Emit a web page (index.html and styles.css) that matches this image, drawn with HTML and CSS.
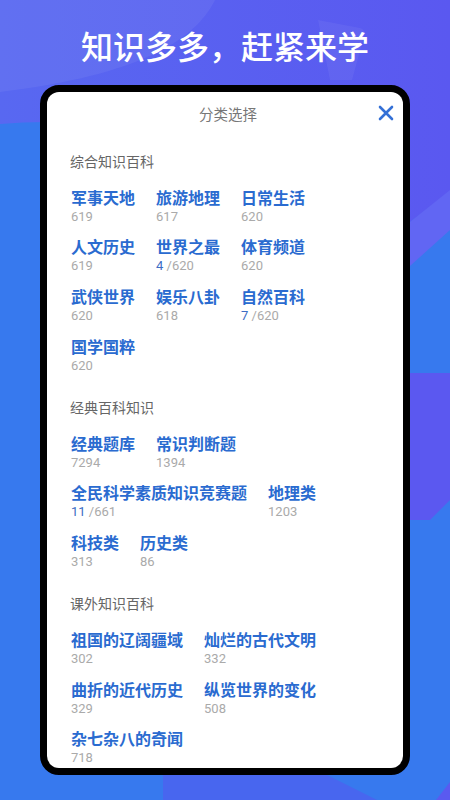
FILE: index.html
```html
<!DOCTYPE html>
<html lang="zh">
<head>
<meta charset="utf-8">
<title>分类选择</title>
<link rel="stylesheet" href="styles.css">
</head>
<body>
<svg class="bg" viewBox="0 0 450 800" width="450" height="800" aria-hidden="true">
  <defs>
    <linearGradient id="topg" x1="0" y1="0" x2="1" y2="0">
      <stop offset="0" stop-color="#5868f1"/>
      <stop offset="1" stop-color="#5a58f0"/>
    </linearGradient>
  </defs>
  <rect x="0" y="0" width="450" height="800" fill="#3779ee"/>
  <path d="M0 0 H450 V192 L410 222 C300 170 150 110 0 124 Z" fill="url(#topg)"/>
  <path d="M0 0 H215 C195 40 140 75 0 92 Z" fill="#ffffff" opacity="0.06"/>
  <path d="M410 222 L450 190 L450 230 L410 266 Z" fill="#6166f3"/>
  <path d="M318 20 L360 28 Q366 30 364 36 L352 80 L330 80 Z" fill="#ffffff" opacity="0.05"/>
  <path d="M395 373 H450 V500 L430 520 H395 Z" fill="#5b58f0"/>
  <path d="M163 775 H327 L377 800 H163 Z" fill="#4866ef"/>
  <path d="M436 800 L450 782 V800 Z" fill="#5a5af0"/>
</svg>
<main class="page">
  <h1 class="slogan">知识多多，赶紧来学</h1>
  <section class="phone">
    <div class="screen">
      <header class="bar">
        <span class="bar-side"></span>
        <span class="bar-title">分类选择</span>
        <span class="bar-side bar-right">
          <svg class="close" viewBox="0 0 16 16" width="16" height="16">
            <path d="M2 2 L14 14 M14 2 L2 14" stroke="#3470d6" stroke-width="2.6" stroke-linecap="round" fill="none"/>
          </svg>
        </span>
      </header>

      <div class="group">
        <h2 class="group-title">综合知识百科</h2>
        <div class="items">
          <div class="item"><div class="name">军事天地</div><div class="count">619</div></div>
          <div class="item"><div class="name">旅游地理</div><div class="count">617</div></div>
          <div class="item"><div class="name">日常生活</div><div class="count">620</div></div>
          <div class="item"><div class="name">人文历史</div><div class="count">619</div></div>
          <div class="item"><div class="name">世界之最</div><div class="count"><span class="done">4</span> /620</div></div>
          <div class="item"><div class="name">体育频道</div><div class="count">620</div></div>
          <div class="item"><div class="name">武侠世界</div><div class="count">620</div></div>
          <div class="item"><div class="name">娱乐八卦</div><div class="count">618</div></div>
          <div class="item"><div class="name">自然百科</div><div class="count"><span class="done">7</span> /620</div></div>
          <div class="item"><div class="name">国学国粹</div><div class="count">620</div></div>
        </div>
      </div>

      <div class="group">
        <h2 class="group-title">经典百科知识</h2>
        <div class="items">
          <div class="item"><div class="name">经典题库</div><div class="count">7294</div></div>
          <div class="item"><div class="name">常识判断题</div><div class="count">1394</div></div>
          <div class="item"><div class="name">全民科学素质知识竞赛题</div><div class="count"><span class="done">11</span> /661</div></div>
          <div class="item"><div class="name">地理类</div><div class="count">1203</div></div>
          <div class="item"><div class="name">科技类</div><div class="count">313</div></div>
          <div class="item"><div class="name">历史类</div><div class="count">86</div></div>
        </div>
      </div>

      <div class="group">
        <h2 class="group-title">课外知识百科</h2>
        <div class="items">
          <div class="item"><div class="name">祖国的辽阔疆域</div><div class="count">302</div></div>
          <div class="item"><div class="name">灿烂的古代文明</div><div class="count">332</div></div>
          <div class="item"><div class="name">曲折的近代历史</div><div class="count">329</div></div>
          <div class="item"><div class="name">纵览世界的变化</div><div class="count">508</div></div>
          <div class="item"><div class="name">杂七杂八的奇闻</div><div class="count">718</div></div>
        </div>
      </div>
    </div>
  </section>
</main>
</body>
</html>
```

FILE: styles.css
```css
* { box-sizing: border-box; }

html, body {
  margin: 0;
  padding: 0;
}

body {
  width: 450px;
  height: 800px;
  overflow: hidden;
  position: relative;
  background: #3779ee;
  font-family: Roboto, "Noto Sans CJK SC", "Noto Sans", sans-serif;
}

.bg {
  position: absolute;
  left: 0;
  top: 0;
  z-index: 0;
  display: block;
}

.page {
  position: relative;
  z-index: 1;
  display: flex;
  flex-direction: column;
}

.slogan {
  margin: 0;
  padding-top: 25px;
  height: 85px;
  line-height: 40px;
  font-size: 32px;
  font-weight: 500;
  color: #ffffff;
  text-align: center;
  font-family: "Noto Sans CJK SC", sans-serif;
}

.phone {
  margin: 0 40px;
  height: 690px;
  border: 7px solid #000;
  border-radius: 19px;
  background: #000;
}

.screen {
  height: 100%;
  background: #fff;
  border-radius: 12px;
  overflow: hidden;
}

.bar {
  height: 42px;
  display: grid;
  grid-template-columns: 1fr auto 1fr;
  align-items: center;
}

.bar-title {
  padding-left: 6px;
  font-size: 14.5px;
  color: #777;
  font-family: "Noto Sans CJK SC", sans-serif;
}

.bar-right {
  display: flex;
  justify-content: flex-end;
  padding-right: 9px;
}

.close { display: block; }

.group {
  padding: 0 24px;
  margin-top: 22.5px;
}

.bar + .group { margin-top: 17px; }

.group-title {
  margin: 0 0 14.5px -1px;
  font-size: 14px;
  line-height: 20px;
  font-weight: 400;
  color: #666;
  font-family: "Noto Sans CJK SC", sans-serif;
}

.items {
  display: flex;
  flex-wrap: wrap;
  column-gap: 21px;
  row-gap: 9.7px;
}

.name {
  font-size: 16px;
  line-height: 22px;
  font-weight: 700;
  color: #2a6bd0;
  font-family: "Noto Sans CJK SC", sans-serif;
}

.count {
  font-size: 13px;
  line-height: 18px;
  color: #aaaaaa;
}

.done { color: #3c6dc4; }
```
